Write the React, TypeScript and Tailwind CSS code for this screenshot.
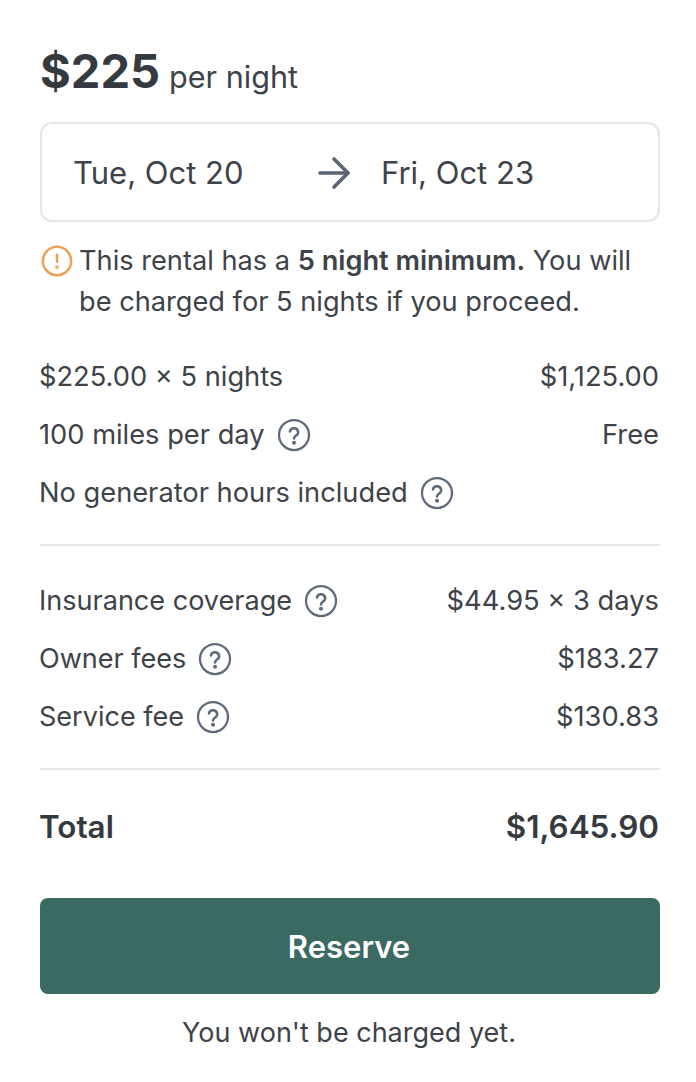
import { ArrowRight } from 'lucide-react';

function Help() {
  return (
    <svg viewBox="0 0 24 24" fill="none" stroke="#5f6b7a" strokeWidth="1.5" strokeLinecap="round" strokeLinejoin="round" className="w-[36px] h-[36px] shrink-0">
      <circle cx="12" cy="12" r="10" />
      <path d="M9.3 9.6a2.8 2.8 0 0 1 5.5.7c0 1.9-2.8 2.2-2.8 4" strokeWidth="1.7" />
      <circle cx="12" cy="17.2" r="0.6" fill="#5f6b7a" />
    </svg>
  );
}

function Row({ label, value, help }: { label: string; value?: string; help?: boolean }) {
  return (
    <div className="flex items-center justify-between h-[58px] -ml-px pr-px">
      <div className="flex items-center gap-[11px]">
        <span>{label}</span>
        {help && <Help />}
      </div>
      {value && <span className="text-[27.3px]">{value}</span>}
    </div>
  );
}

export default function App() {
  return (
    <div className="w-[696px] h-[1082px] bg-white pl-10 pr-9 pt-[40px] text-[27px] leading-[40px] text-[#3d4349] font-['Inter',sans-serif]">
      <div className="flex items-baseline gap-[9px] h-[60px] pt-[1px]">
        <span className="text-[47px] leading-[60px] font-bold text-[#353a40]">$225</span>
        <span className="text-[30.6px] leading-[52px]">per night</span>
      </div>
      <div className="mt-[22px] h-[100px] rounded-xl border-2 border-[#e2e6ea] flex items-center pl-[31px] pt-[2px] text-[31px]">
        <span className="w-[237px]">Tue, Oct 20</span>
        <ArrowRight className="w-[48px] h-[48px] text-[#5a6472]" strokeWidth={1.8} />
        <span className="ml-[23px]">Fri, Oct 23</span>
      </div>
      <div className="mt-[18px] flex gap-[5px] text-[27.2px] leading-[41px]">
        <svg viewBox="0 0 24 24" fill="none" stroke="#e9a45b" strokeWidth="1.8" strokeLinecap="round" className="w-[34px] h-[34px] mt-[4px] shrink-0">
          <circle cx="12" cy="12" r="10" />
          <path d="M12 7.5v5" />
          <circle cx="12" cy="16.3" r="0.4" fill="#e9a45b" />
        </svg>
        <div>
          <p>
            <span>This rental has a </span>
            <b className="font-semibold">5 night minimum.</b>
            <span> You will</span>
          </p>
          <p>be charged for 5 nights if you proceed.</p>
        </div>
      </div>
      <div className="mt-[26px] text-[27.25px]">
        <Row label="$225.00 × 5 nights" value="$1,125.00" />
        <Row label="100 miles per day" value="Free" help />
        <Row label="No generator hours included" help />
      </div>
      <div className="mt-[22px] border-t-2 border-[#e5e7eb]" />
      <div className="mt-[26px] text-[27.05px]">
        <Row label="Insurance coverage" value="$44.95 × 3 days" help />
        <Row label="Owner fees" value="$183.27" help />
        <Row label="Service fee" value="$130.83" help />
      </div>
      <div className="mt-[22px] border-t-2 border-[#e5e7eb]" />
      <div className="mt-[37px] flex justify-between text-[31.4px] font-semibold text-[#353a40] -ml-px pr-px">
        <span>Total</span>
        <span>$1,645.90</span>
      </div>
      <button className="mt-[51px] w-full h-24 rounded-lg bg-[#3a6a61] text-white text-[31px] font-semibold pt-[2px] pr-[2px]">Reserve</button>
      <p className="mt-[19px] text-center pr-[2px]">You won't be charged yet.</p>
    </div>
  );
}
